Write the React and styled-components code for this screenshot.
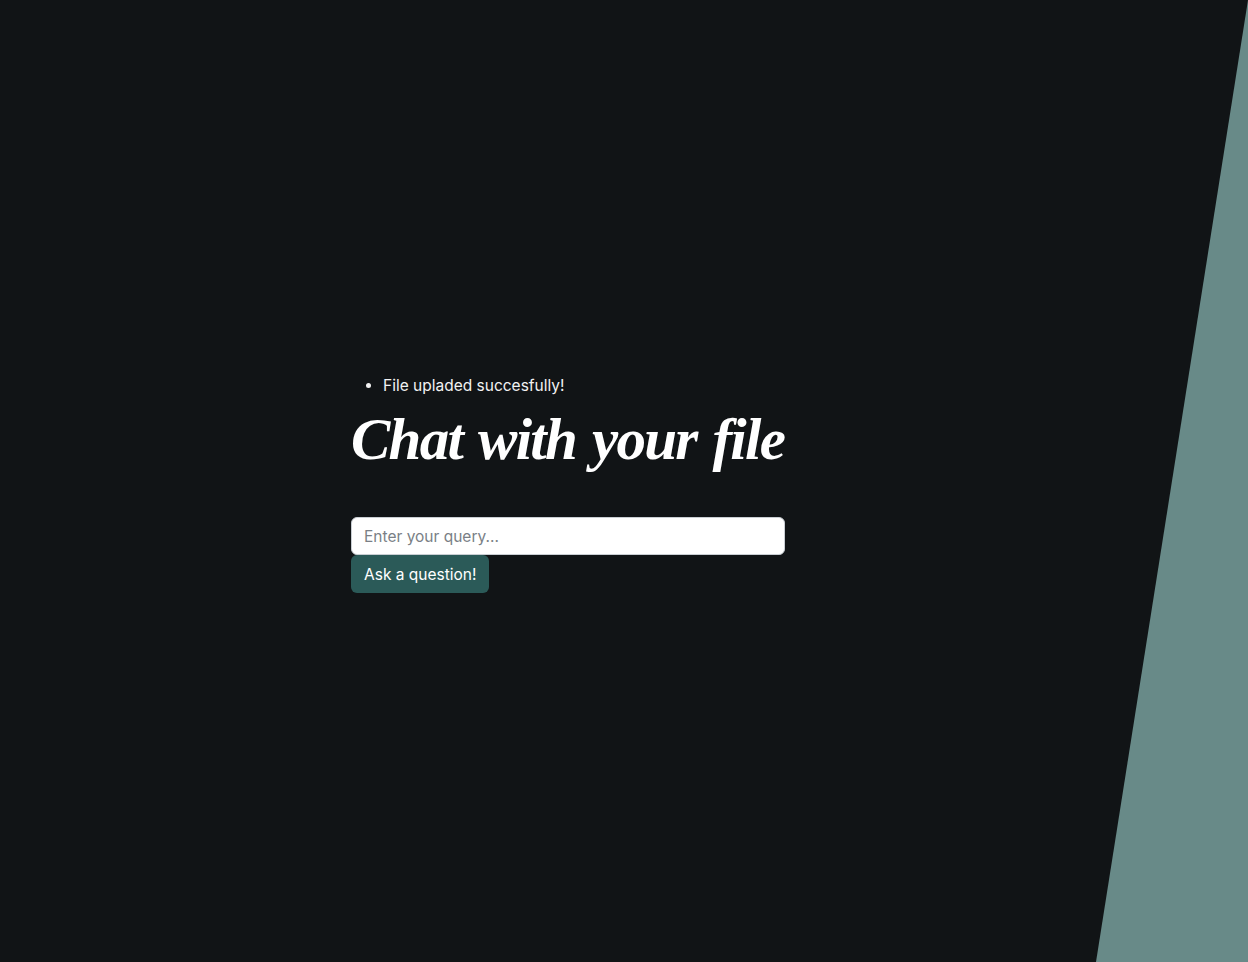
import React from 'react'
import styled, { createGlobalStyle } from 'styled-components'

const GlobalStyle = createGlobalStyle`
  * { box-sizing: border-box; }
  html, body {
    margin: 0;
    padding: 0;
    background: #111416;
  }
`

const Page = styled.div`
  position: relative;
  height: 962px;
  overflow: hidden;
  background: #111416;
  display: grid;
  grid-template-columns: 1fr 112px;
  font-family: Inter, "Noto Sans", sans-serif;
`

// decorative slanted panel on the right
const Slant = styled.div`
  position: absolute;
  inset: 0;
  background: #688a88;
  clip-path: polygon(1248px 0, 1248px 100%, 1096px 100%);
  pointer-events: none;
`

const Main = styled.main`
  position: relative;
  display: flex;
  justify-content: center;
  align-items: center;
`

const Column = styled.div`
  width: 434px;
  display: flex;
  flex-direction: column;
`

const Notices = styled.ul`
  margin: 6px 0 0;
  padding-left: 32px;
  color: #f2f2f2;
  font-size: 15.5px;
  line-height: 22px;
`

const Title = styled.h1`
  margin: 6px 0 42px;
  color: #ffffff;
  font-family: "Liberation Serif", "Times New Roman", serif;
  font-style: italic;
  font-weight: 700;
  font-size: 59px;
  line-height: 72px;
  letter-spacing: -1.75px;
  word-spacing: 3px;
  white-space: nowrap;
`

const Input = styled.input`
  width: 100%;
  height: 38px;
  padding: 0 12px;
  border: 1px solid #c9ced3;
  border-radius: 6px;
  background: #ffffff;
  font-family: inherit;
  font-size: 15.5px;
  color: #212529;
  outline: none;
  &::placeholder { color: #7a7f86; }
`

const Button = styled.button`
  align-self: flex-start;
  height: 38px;
  padding: 0 13px;
  border: none;
  border-radius: 6px;
  background: #2b5a58;
  color: #ffffff;
  font-family: inherit;
  font-size: 15.5px;
  cursor: pointer;
`

const App = () => {
  return (
    <Page>
      <GlobalStyle />
      <Slant />
      <Main>
        <Column>
          <Notices>
            <li>File upladed succesfully!</li>
          </Notices>
          <Title>Chat with your file</Title>
          <Input placeholder="Enter your query..." />
          <Button>Ask a question!</Button>
        </Column>
      </Main>
    </Page>
  )
}

export default App
